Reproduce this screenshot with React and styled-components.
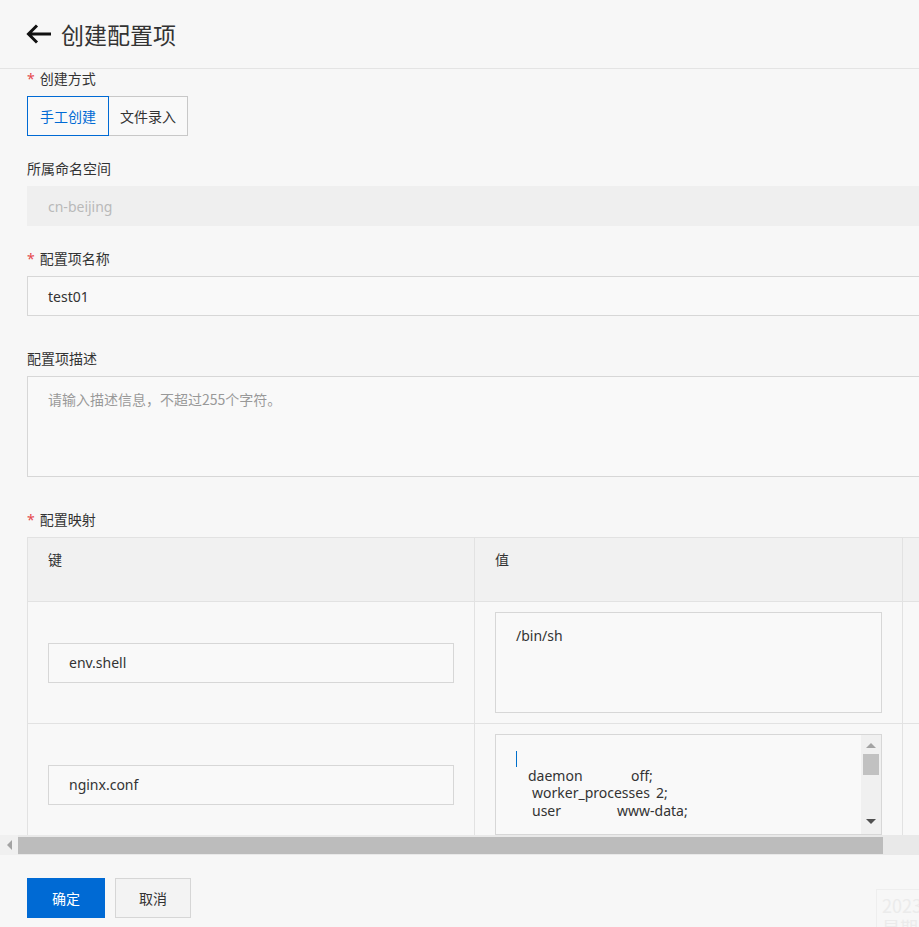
import React from "react";
import styled, { createGlobalStyle } from "styled-components";

const GlobalStyle = createGlobalStyle`
    html, body {
        margin: 0;
        padding: 0;
        background: #f7f7f7;
        overflow: hidden;
    }
    body {
        font-family: "Noto Sans", "Noto Sans CJK SC", sans-serif;
        font-size: 14px;
        color: #333;
    }
`;

const Page = styled.div`
    position: relative;
    width: 919px;
    height: 927px;
    overflow: hidden;
`;

const Header = styled.div`
    height: 68px;
    display: flex;
    align-items: center;
    gap: 9px;
    padding-left: 26px;
    border-bottom: 1px solid #e4e4e4;
`;

const Title = styled.h1`
    margin: 0;
    font-size: 23px;
    font-weight: 400;
    color: #333;
    font-family: "Noto Sans CJK SC", sans-serif;
    line-height: 30px;
`;

const Form = styled.div`
    padding-left: 27px;
`;

const FormItem = styled.div`
    margin-top: ${props => props.$top}px;
`;

const Label = styled.div`
    height: 18px;
    line-height: 18px;
    margin-bottom: 9px;
    font-size: 14px;
    color: #333;
    font-family: "Noto Sans CJK SC", sans-serif;
`;

const Star = styled.span`
    color: #e5484d;
    margin-right: 5px;
    font-family: "Noto Sans", sans-serif;
`;

const Segmented = styled.div`
    display: flex;
`;

const SegButton = styled.div`
    height: 40px;
    box-sizing: border-box;
    padding: 0 ${props => props.$active ? 12 : 11}px;
    display: flex;
    align-items: center;
    border: 1px solid ${props => props.$active ? '#006ad4' : '#c8c8c8'};
    border-left-width: ${props => props.$active ? '1px' : '0'};
    color: ${props => props.$active ? '#006ad4' : '#333'};
    background: #f9f9f9;
    font-family: "Noto Sans CJK SC", sans-serif;
    font-size: 14px;
`;

const Input = styled.div`
    width: 1000px;
    height: 40px;
    box-sizing: border-box;
    padding-left: 20px;
    display: flex;
    align-items: center;
    border: 1px solid ${props => props.$disabled ? '#efefef' : '#d7d7d7'};
    background: ${props => props.$disabled ? '#efefef' : '#f9f9f9'};
    color: ${props => props.$disabled ? '#b9b9b9' : '#333'};
    font-size: 14px;
`;

const TextArea = styled.div`
    width: 1000px;
    height: 101px;
    box-sizing: border-box;
    padding: 12px 20px;
    border: 1px solid #d7d7d7;
    background: #f9f9f9;
    color: #999;
    font-family: "Noto Sans CJK SC", sans-serif;
    font-size: 14px;
`;

const TableViewport = styled.div`
    height: 298px;
    overflow: hidden;
    margin-left: -27px;
    padding-left: 27px;
`;

const Table = styled.div`
    width: 980px;
    border-left: 1px solid #e2e2e2;
    border-top: 1px solid #e2e2e2;
`;

const Row = styled.div`
    display: grid;
    grid-template-columns: 447px 428px 1fr;
    height: ${props => props.$height}px;
    background: ${props => props.$head ? '#f1f1f1' : '#f8f8f8'};
    border-bottom: 1px solid #e2e2e2;
    box-sizing: border-box;
`;

const Cell = styled.div`
    border-right: 1px solid #e2e2e2;
    padding: ${props => props.$head ? '11px 20px' : '10px 20px'};
    display: flex;
    align-items: ${props => props.$center ? 'center' : 'flex-start'};
    font-family: "Noto Sans CJK SC", sans-serif;
    font-size: 14px;
    color: #333;
`;

const KeyInput = styled.div`
    width: 100%;
    height: 40px;
    box-sizing: border-box;
    padding-left: 20px;
    display: flex;
    align-items: center;
    border: 1px solid #d7d7d7;
    background: #f9f9f9;
    font-family: "Noto Sans", sans-serif;
`;

const ValueBox = styled.div`
    position: relative;
    width: 100%;
    height: 101px;
    box-sizing: border-box;
    padding: 14px 20px;
    border: 1px solid #d7d7d7;
    background: #f9f9f9;
    font-family: "Noto Sans", sans-serif;
    font-size: 14px;
    overflow: hidden;
`;

const CodeLine = styled.div`
    display: flex;
    height: 17.5px;
    line-height: 17.5px;
    padding-left: ${props => props.$indent}px;
    color: #333;
`;

const Caret = styled.span`
    display: inline-block;
    width: 1px;
    height: 16px;
    margin-top: 2px;
    background: #0070cc;
`;

const CodeKey = styled.span`
    display: inline-block;
    width: ${props => props.$w}px;
    white-space: pre;
`;

const VScroll = styled.div`
    position: absolute;
    top: 0;
    right: 0;
    bottom: 0;
    width: 20px;
    background: #f0f0f0;
    display: flex;
    flex-direction: column;
    align-items: center;
`;

const ArrowUp = styled.div`
    margin-top: 8px;
    width: 0;
    height: 0;
    border-left: 5px solid transparent;
    border-right: 5px solid transparent;
    border-bottom: 5px solid #a3a3a3;
`;

const ArrowDown = styled.div`
    position: absolute;
    top: 84px;
    width: 0;
    height: 0;
    border-left: 5px solid transparent;
    border-right: 5px solid transparent;
    border-top: 5px solid #505050;
`;

const VThumb = styled.div`
    margin-top: 6px;
    width: 16px;
    height: 21px;
    background: #c1c1c1;
`;

const HScroll = styled.div`
    height: 20px;
    display: flex;
    align-items: center;
    background: #e9e9e9;
    margin-left: -27px;
`;

const HArrow = styled.div`
    width: 18px;
    height: 20px;
    background: #f0f0f0;
    display: flex;
    align-items: center;
    justify-content: center;
    &::before {
        content: "";
        border-top: 5px solid transparent;
        border-bottom: 5px solid transparent;
        border-right: 5px solid #a3a3a3;
    }
`;

const HThumb = styled.div`
    width: 865px;
    height: 17px;
    background: #bcbcbc;
`;

const Footer = styled.div`
    display: flex;
    gap: 10px;
    margin-top: 23px;
`;

const Button = styled.div`
    height: 40px;
    box-sizing: border-box;
    width: ${props => props.$w}px;
    display: flex;
    align-items: center;
    justify-content: center;
    background: ${props => props.$primary ? '#006ad4' : '#f3f3f3'};
    color: ${props => props.$primary ? '#fff' : '#333'};
    border: 1px solid ${props => props.$primary ? '#006ad4' : '#d6d6d6'};
    font-family: "Noto Sans CJK SC", sans-serif;
    font-size: 14px;
`;

const Ghost = styled.div`
    position: absolute;
    left: 876px;
    top: 889px;
    width: 60px;
    height: 50px;
    border: 1px solid #eeeeee;
    padding: 4px 5px;
    color: #ebebeb;
    font-family: "Noto Sans CJK SC", sans-serif;
    font-size: 18px;
    line-height: 22px;
    white-space: nowrap;
`;

const BackArrow = () => (
    <svg width="26" height="22" viewBox="0 0 26 22">
        <path d="M25 11H3M11 2.5L2.5 11L11 19.5" fill="none" stroke="#111" strokeWidth="3" strokeLinecap="butt" />
    </svg>
);

const App = () => {
    return (
        <Page>
            <GlobalStyle />
            <Header>
                <BackArrow />
                <Title>创建配置项</Title>
            </Header>
            <Form>
                <FormItem $top={0}>
                    <Label><Star>*</Star>创建方式</Label>
                    <Segmented>
                        <SegButton $active>手工创建</SegButton>
                        <SegButton>文件录入</SegButton>
                    </Segmented>
                </FormItem>
                <FormItem $top={23}>
                    <Label>所属命名空间</Label>
                    <Input $disabled>cn-beijing</Input>
                </FormItem>
                <FormItem $top={23}>
                    <Label><Star>*</Star>配置项名称</Label>
                    <Input>test01</Input>
                </FormItem>
                <FormItem $top={33}>
                    <Label>配置项描述</Label>
                    <TextArea>请输入描述信息，不超过255个字符。</TextArea>
                </FormItem>
                <FormItem $top={33}>
                    <Label><Star>*</Star>配置映射</Label>
                    <TableViewport>
                        <Table>
                            <Row $head $height={64}>
                                <Cell $head>键</Cell>
                                <Cell $head>值</Cell>
                                <Cell $head />
                            </Row>
                            <Row $height={122}>
                                <Cell $center><KeyInput>env.shell</KeyInput></Cell>
                                <Cell>
                                    <ValueBox>
                                        <CodeLine $indent={0}>/bin/sh</CodeLine>
                                    </ValueBox>
                                </Cell>
                                <Cell />
                            </Row>
                            <Row $height={122}>
                                <Cell $center><KeyInput>nginx.conf</KeyInput></Cell>
                                <Cell>
                                    <ValueBox>
                                        <CodeLine $indent={0}><Caret /></CodeLine>
                                        <CodeLine $indent={12}><CodeKey $w={103}>daemon</CodeKey>off;</CodeLine>
                                        <CodeLine $indent={16}><CodeKey $w={124}>worker_processes</CodeKey>2;</CodeLine>
                                        <CodeLine $indent={16}><CodeKey $w={85}>user</CodeKey>www-data;</CodeLine>
                                        <VScroll>
                                            <ArrowUp />
                                            <VThumb />
                                            <ArrowDown />
                                        </VScroll>
                                    </ValueBox>
                                </Cell>
                                <Cell />
                            </Row>
                        </Table>
                    </TableViewport>
                    <HScroll>
                        <HArrow />
                        <HThumb />
                    </HScroll>
                </FormItem>
                <Footer>
                    <Button $primary $w={78}>确定</Button>
                    <Button $w={76}>取消</Button>
                </Footer>
            </Form>
            <Ghost>2023年<br />星期三</Ghost>
        </Page>
    );
};

export default App;
